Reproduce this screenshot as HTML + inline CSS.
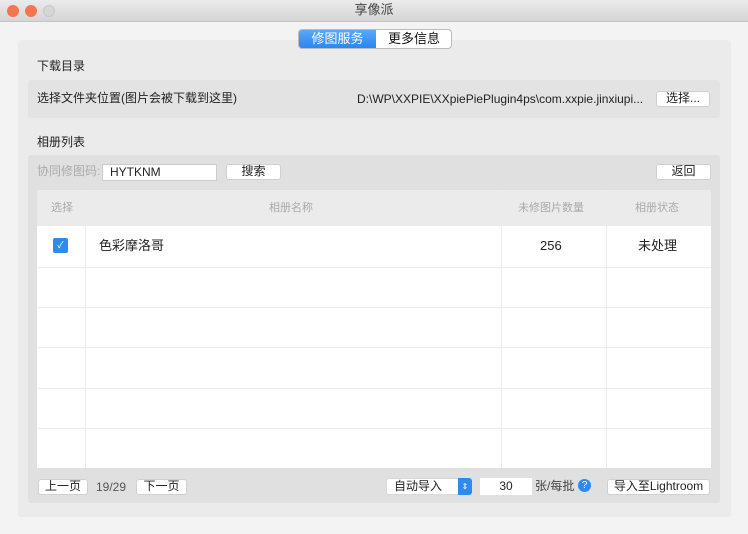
<!DOCTYPE html>
<html><head><meta charset="utf-8"><style>
*{margin:0;padding:0;box-sizing:border-box}
body{width:748px;height:534px;background:#f3f3f3;font-family:"Liberation Sans","Noto Sans CJK SC",sans-serif;font-size:12px;line-height:14px;color:#222;position:relative;overflow:hidden}
.a{position:absolute}
.tb{left:0;top:0;width:748px;height:22px;background:linear-gradient(#ebebeb,#d5d5d5);border-bottom:1px solid #c4c4c4;text-align:center;line-height:20px;font-size:13px;color:#444}
.dot{width:12px;height:12px;border-radius:50%;top:5px}
.btn{background:#fff;border:1px solid #d0d0d0;border-radius:3px;text-align:center;font-size:12px;line-height:13px;height:16px}
</style></head><body>
<div class="a tb">享像派</div>
<div class="a dot" style="left:7px;background:#f4754e"></div>
<div class="a dot" style="left:25px;background:#f4754e"></div>
<div class="a dot" style="left:43px;background:#d6d6d6;border:1px solid #c8c8c8"></div>

<div class="a" style="left:18px;top:40px;width:713px;height:477px;background:#ebebeb;border-radius:3px"></div>
<div class="a" style="left:298px;top:29px;width:154px;height:20px;border:1px solid #bbb;border-radius:4px;background:#fff;overflow:hidden;font-size:13px;line-height:17px">
<div class="a" style="left:0;top:0;width:77px;height:18px;background:linear-gradient(#5aa8f8,#2a86ef);color:#fff;text-align:center">修图服务</div>
<div class="a" style="left:77px;top:0;width:76px;height:18px;text-align:center;color:#111">更多信息</div></div>

<div class="a" style="left:37px;top:59px">下载目录</div>
<div class="a" style="left:28px;top:80px;width:692px;height:38px;background:#e3e3e3;border-radius:3px"></div>
<div class="a" style="left:37px;top:91px">选择文件夹位置(图片会被下载到这里)</div>
<div class="a" style="left:357px;top:92px">D:\WP\XXPIE\XXpiePiePlugin4ps\com.xxpie.jinxiupi...</div>
<div class="a btn" style="left:656px;top:91px;width:54px">选择...</div>

<div class="a" style="left:37px;top:135px">相册列表</div>
<div class="a" style="left:28px;top:155px;width:692px;height:348px;background:#e0e0e0;border-radius:3px"></div>
<div class="a" style="left:37px;top:164px;color:#aaa">协同修图码:</div>
<div class="a" style="left:102px;top:164px;width:115px;height:17px;background:#fff;border:1px solid #ccc;padding-left:7px;line-height:15px">HYTKNM</div>
<div class="a btn" style="left:226px;top:164px;width:55px">搜索</div>
<div class="a btn" style="left:656px;top:164px;width:55px">返回</div>

<div class="a" style="left:37px;top:190px;width:674px;height:278px;background:#fff"></div>
<div class="a" style="left:37px;top:190px;width:674px;height:36px;background:#ebebeb;color:#aaa;font-size:11px;line-height:36px">
<span class="a" style="left:14px">选择</span><span class="a" style="left:232px">相册名称</span><span class="a" style="left:481px">未修图片数量</span><span class="a" style="left:598px">相册状态</span></div>
<div class="a" style="left:85px;top:190px;width:1px;height:278px;background:#ececec"></div>
<div class="a" style="left:501px;top:190px;width:1px;height:278px;background:#ececec"></div>
<div class="a" style="left:606px;top:190px;width:1px;height:278px;background:#ececec"></div>
<div class="a" style="left:37px;top:267px;width:674px;height:1px;background:#ececec"></div>
<div class="a" style="left:37px;top:307px;width:674px;height:1px;background:#ececec"></div>
<div class="a" style="left:37px;top:347px;width:674px;height:1px;background:#ececec"></div>
<div class="a" style="left:37px;top:388px;width:674px;height:1px;background:#ececec"></div>
<div class="a" style="left:37px;top:428px;width:674px;height:1px;background:#ececec"></div>
<div class="a" style="left:53px;top:238px;width:15px;height:15px;background:#2f8af0;border-radius:2px;color:#fff;font-size:9px;text-align:center;line-height:15px">✓</div>
<div class="a" style="left:99px;top:239px;font-size:13px">色彩摩洛哥</div>
<div class="a" style="left:540px;top:239px;font-size:13px">256</div>
<div class="a" style="left:638px;top:239px;font-size:13px">未处理</div>

<div class="a btn" style="left:38px;top:479px;width:50px">上一页</div>
<div class="a" style="left:96px;top:480px;color:#555">19/29</div>
<div class="a btn" style="left:136px;top:479px;width:51px">下一页</div>
<div class="a" style="left:386px;top:478px;width:86px;height:17px;background:#fff;border-radius:3px;border:1px solid #d8d8d8;padding-left:7px;line-height:14px">自动导入</div>
<div class="a" style="left:458px;top:478px;width:14px;height:17px;background:#2f8af0;border-radius:0 3px 3px 0;color:#fff;font-size:8px;text-align:center;line-height:17px">⇕</div>
<div class="a" style="left:480px;top:478px;width:52px;height:17px;background:#fff;text-align:center;line-height:17px">30</div>
<div class="a" style="left:535px;top:479px;color:#444">张/每批</div>
<div class="a" style="left:578px;top:479px;width:13px;height:13px;border-radius:50%;background:#2f8af0;color:#fff;font-size:10px;text-align:center;line-height:13px">?</div>
<div class="a btn" style="left:607px;top:479px;width:103px">导入至Lightroom</div>
</body></html>
